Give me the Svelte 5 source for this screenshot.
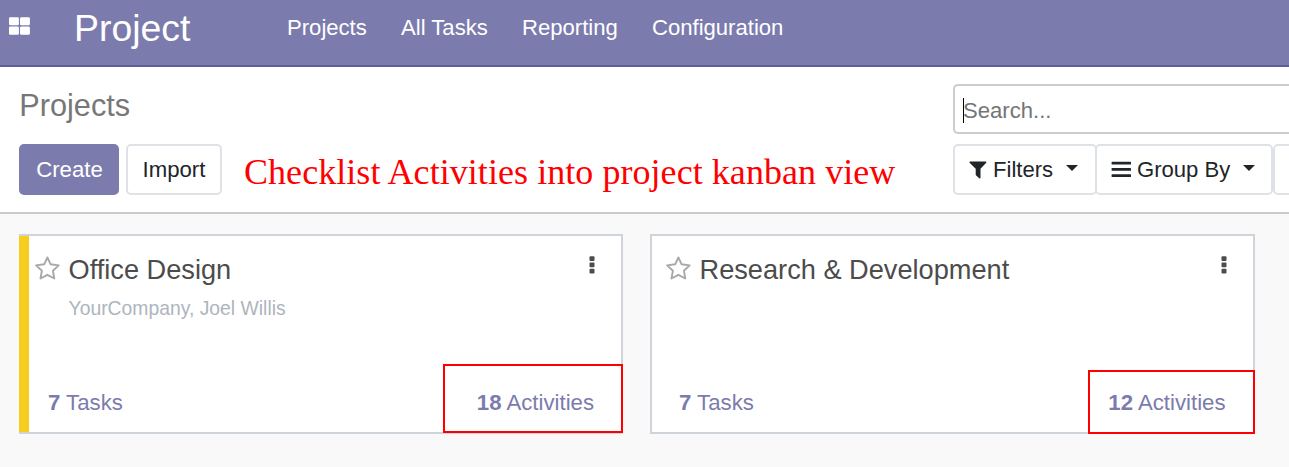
<script>
  const menu = ['Projects', 'All Tasks', 'Reporting', 'Configuration'];
  const projects = [
    { name: 'Office Design', partner: 'YourCompany, Joel Willis', tasks: 7, activities: 18, color: 'yellow' },
    { name: 'Research & Development', partner: '', tasks: 7, activities: 12, color: 'plain' }
  ];
</script>

<div class="app">
  <header>
    <svg class="apps" width="21" height="18" viewBox="0 0 21 18" fill="#fff">
      <rect x="0" y="0.2" width="9.9" height="8" rx="1.3" />
      <rect x="11" y="0.2" width="9.9" height="8" rx="1.3" />
      <rect x="0" y="9.6" width="9.9" height="8.2" rx="1.3" />
      <rect x="11" y="9.6" width="9.9" height="8.2" rx="1.3" />
    </svg>
    <span class="brand">Project</span>
    <nav>
      {#each menu as item}<a>{item}</a>{/each}
    </nav>
  </header>

  <section class="control">
    <div class="left">
      <h1>Projects</h1>
      <div class="actions">
        <button class="btn primary">Create</button>
        <button class="btn import">Import</button>
        <span class="note">Checklist Activities into project kanban view</span>
      </div>
    </div>
    <div class="right">
      <div class="search"><i class="caret"></i><span>Search...</span></div>
      <div class="filters">
        <button class="btn filter">
          <svg width="18" height="18" viewBox="0 0 18 18" fill="#212529"><path d="M1 0.5H16.8Q18 0.7 17.2 1.7L11.5 7.7V16.8Q11.3 18 10.2 17.3L7.2 14.5Q6.7 14 6.7 13.5V7.7L0.6 1.7Q0 0.8 1 0.5Z" /></svg>
          <span>Filters</span><i class="arrow"></i>
        </button>
        <button class="btn group">
          <svg width="20" height="17" viewBox="0 0 20 17" fill="#212529"><rect x="0.6" y="0.8" width="19.4" height="2.8" rx=".6" /><rect x="0.6" y="7" width="19.4" height="2.8" rx=".6" /><rect x="0.6" y="13.2" width="19.4" height="2.8" rx=".6" /></svg>
          <span>Group By</span><i class="arrow"></i>
        </button>
        <button class="btn more" aria-label="Favorites"></button>
      </div>
    </div>
  </section>

  <main>
    {#each projects as p}
      <article class={p.color}>
        <div class="top">
          <svg class="star" width="26" height="25" viewBox="0 0 26 25" fill="none" stroke="#a8a8a8" stroke-width="1.9" stroke-linejoin="round"><path d="M12.4 2.4L15.6 9.3L23.7 10.4L17.9 15.7L19.3 23.5L12.4 19.8L5.5 23.5L6.9 15.7L1.1 10.4L9.2 9.3Z" /></svg>
          <div class="info">
            <h2>{p.name}</h2>
            {#if p.partner}<p>{p.partner}</p>{/if}
          </div>
          <svg class="dots" width="6" height="18" viewBox="0 0 6 18" fill="#4c4c4c"><rect x="0.5" y="0.2" width="5" height="4.8" rx="1" /><rect x="0.5" y="6.4" width="5" height="4.8" rx="1" /><rect x="0.5" y="12.7" width="5" height="4.8" rx="1" /></svg>
        </div>
        <div class="bottom">
          <a><b>{p.tasks}</b> Tasks</a>
          <a><b>{p.activities}</b> Activities</a>
        </div>
        <div class="highlight"></div>
      </article>
    {/each}
  </main>
</div>

<style>
  :global(body) { overflow: hidden; background: #f9f9f9; }
  * { box-sizing: border-box; }
  .app { height: 467px; overflow: hidden; font: 22.2px/33px "Liberation Sans", Arial, sans-serif; color: #212529; background: #f9f9f9; }
  header { height: 67px; display: flex; align-items: flex-start; background: #7c7bad; border-bottom: 2px solid #5f5e97; color: #fff; padding-left: 9px; white-space: nowrap; }
  .apps { margin-top: 17px; }
  .brand { width: 213px; margin-left: 44px; font-size: 37.4px; line-height: 56px; }
  nav { display: flex; gap: 34.2px; font-size: 22.1px; line-height: 56px; }
  .control { height: 147px; display: flex; justify-content: space-between; background: #fff; border-bottom: 2px solid #cacaca; padding-left: 19px; }
  h1 { margin: 16px 0; font-size: 30.7px; font-weight: 400; line-height: 45px; color: #777; padding-left: 0.3px; }
  .actions { display: flex; }
  .btn { height: 51px; flex: none; border: 2px solid #dee2e6; border-radius: 5px; background: #fff; color: #212529; font: inherit; padding: 0; display: flex; align-items: center; justify-content: center; white-space: nowrap; }
  .btn.primary { width: 100px; background: #7c7bad; border-color: #7c7bad; color: #fff; padding-left: 1px; }
  .import { width: 96px; margin-left: 7px; }
  .note { margin-left: 22px; font: 36px/56px "Liberation Serif", "Times New Roman", serif; letter-spacing: 0.055px; color: #f00; white-space: nowrap; }
  .right { width: 336px; flex: none; padding-top: 17px; overflow: hidden; }
  .search { height: 50px; margin-bottom: 10px; display: flex; align-items: center; padding-left: 8px; border: 2px solid #ccc; border-right: 0; border-radius: 5px 0 0 5px; color: #757575; }
  .search span { padding-top: 2px; margin-left: -1px; font-size: 22.1px; }
  .caret { width: 1px; height: 25px; margin-top: 2px; background: #000; }
  .filters { display: flex; font-size: 22.1px; }
  .btn.filter { width: 144px; justify-content: flex-start; padding-left: 14px; }
  .btn.group { width: 178px; margin-left: -2px; justify-content: flex-start; padding-left: 14px; }
  .filter svg { margin-right: 6px; }
  .group svg { margin-right: 6px; }
  .more { width: 80px; }
  .arrow { margin: -4px 0 0 12.5px; border: 6.6px solid transparent; border-top-color: #212529; border-bottom: 0; }
  main { display: flex; gap: 27px; padding: 20px 0 0 19px; }
  article { position: relative; width: 604px; height: 200px; flex: none; border: 2px solid #ced4da; background: #fff; display: flex; flex-direction: column; justify-content: space-between; padding: 16px 27px 13px 14px; }
  article.plain { width: 605px; padding-right: 27.5px; }
  article.yellow { border-left: 0; padding-left: 16px; background: linear-gradient(90deg, #f7cd1f 10px, #fff 10px); }
  .top { display: flex; align-items: flex-start; }
  .star { margin: 3px 0 0 -0.5px; }
  .info { flex: 1; margin-left: 8px; }
  h2 { margin: 0; font-size: 27.2px; font-weight: 400; line-height: 36px; color: #4c4c4c; }
  p { margin: 3px 0 0; font-size: 19.35px; line-height: 34px; color: #adb5bd; }
  .dots { margin: 4px -1px 0 0; }
  .bottom { display: flex; justify-content: space-between; padding-left: 13px; color: #7c7bad; }
  .highlight { position: absolute; right: -2px; bottom: -2px; width: 167px; height: 64px; border: 2px solid #f00; }
  .yellow .highlight { width: 180px; height: 69px; bottom: -1px; }
</style>
